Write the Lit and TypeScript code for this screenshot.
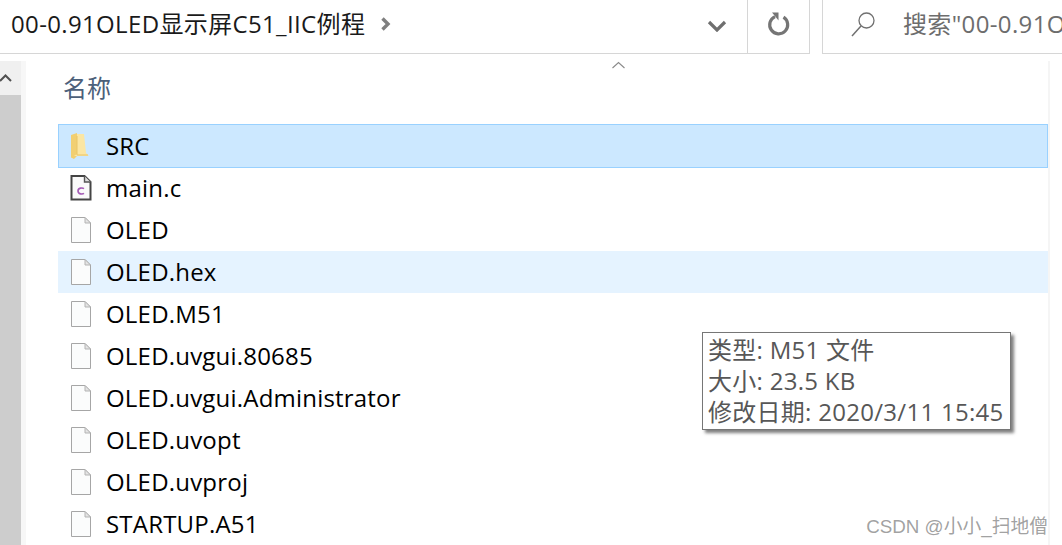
import { LitElement, html, css, svg } from "lit";
import { customElement } from "lit/decorators.js";
import { classMap } from "lit/directives/class-map.js";

type Kind = "folder" | "c" | "file";
interface Row {
  name: string;
  kind: Kind;
  selected?: boolean;
  hover?: boolean;
}

const ROWS: Row[] = [
  { name: "SRC", kind: "folder", selected: true },
  { name: "main.c", kind: "c" },
  { name: "OLED", kind: "file" },
  { name: "OLED.hex", kind: "file", hover: true },
  { name: "OLED.M51", kind: "file" },
  { name: "OLED.uvgui.80685", kind: "file" },
  { name: "OLED.uvgui.Administrator", kind: "file" },
  { name: "OLED.uvopt", kind: "file" },
  { name: "OLED.uvproj", kind: "file" },
  { name: "STARTUP.A51", kind: "file" },
];

const folderIcon = svg`<svg width="22" height="28" viewBox="0 0 22 28">
  <path d="M1 3 L7 1 L7 24 L4 27 L1 25.5 Z" fill="#f1cf72"/>
  <path d="M7 2 H14 L16 21 L19 24 H4 L7 22 Z" fill="#fbe6a3"/>
  <path d="M7 4 V23 H18" fill="none" stroke="#e8c468" stroke-width="1"/>
</svg>`;

const fileIcon = svg`<svg width="22" height="28" viewBox="0 0 22 28">
  <path d="M1.5 1.5 H15 L20.5 7 V26.5 H1.5 Z" fill="#fbfcfc" stroke="#a6a6a6"/>
  <path d="M15 1.5 V7 H20.5 Z" fill="#e4e4e4" stroke="#b4b4b4"/>
</svg>`;

const cIcon = svg`<svg width="22" height="28" viewBox="0 0 22 28">
  <path d="M1.5 2 H14.5 L20.5 8 V25.5 H1.5 Z" fill="#fafafa" stroke="#444" stroke-width="2"/>
  <path d="M14.5 2 V8 H20.5" fill="#ddd" stroke="#555" stroke-width="1.4"/>
  <path d="M14 14.6 C12.6 13.6 8 13.6 8 17 C8 20.4 12.6 20.4 14 19.4" fill="none" stroke="#a45bb5" stroke-width="1.6"/>
</svg>`;

@customElement("app-root")
export class AppRoot extends LitElement {
  static styles = css`
    :host {
      display: block;
      position: relative;
      width: 1062px;
      height: 545px;
      overflow: hidden;
      background: #fff;
      font-family: "Open Sans", "Noto Sans CJK SC", sans-serif;
      color: #000;
    }

    .topbar {
      display: flex;
      height: 54px;
    }
    .address {
      width: 748px;
      flex: none;
      display: flex;
      align-items: center;
      box-sizing: border-box;
      border-bottom: 1px solid #d6d6d6;
      border-right: 1px solid #d6d6d6;
      padding: 0 20px 5px 11px;
    }
    .crumb {
      flex: 1;
      display: flex;
      align-items: center;
      gap: 15px;
      font-size: 24px;
      letter-spacing: 0.35px;
      color: #1a1a1a;
      white-space: nowrap;
    }
    .crumb span {
      margin-top: -4px;
    }
    .address > svg {
      flex: none;
      margin-top: 3px;
    }
    .refresh {
      width: 62px;
      flex: none;
      box-sizing: border-box;
      border-bottom: 1px solid #d6d6d6;
      border-right: 1px solid #d6d6d6;
      display: flex;
      align-items: center;
      justify-content: center;
      padding-bottom: 4px;
    }
    .search {
      margin-left: 12px;
      flex: 1;
      min-width: 0;
      box-sizing: border-box;
      border-bottom: 1px solid #d6d6d6;
      border-left: 1px solid #d6d6d6;
      display: flex;
      align-items: center;
      gap: 26px;
      padding: 0 0 5px 28px;
      font-size: 24px;
      letter-spacing: 0.35px;
      color: #6d6d6d;
      white-space: nowrap;
      overflow: hidden;
    }
    .search span {
      margin-top: -4px;
    }
    .search svg {
      flex: none;
    }

    .body {
      display: flex;
      padding-top: 7px;
      height: 484px;
    }
    .scroll {
      width: 21px;
      flex: none;
      display: flex;
      flex-direction: column;
      background: #cdcdcd;
      border-right: 5px solid #f7f7f7;
    }
    .scroll-up {
      height: 34px;
      background: #f0f0f0;
      display: flex;
      align-items: center;
    }
    .main {
      flex: 1;
      min-width: 0;
      padding-left: 32px;
      border-right: 2px solid #f5f5f5;
      margin-right: 12px;
    }
    .head {
      height: 63px;
      padding: 9px 0 0 5px;
      box-sizing: border-box;
      font-size: 24px;
      line-height: 36px;
      color: #4c607a;
    }
    .row {
      display: flex;
      align-items: center;
      gap: 14px;
      height: 42px;
      padding: 0 0 2px 12px;
      font-size: 24px;
      letter-spacing: 0.2px;
      white-space: nowrap;
      box-sizing: border-box;
    }
    .row svg {
      flex: none;
      margin-top: 2px;
    }
    .row.selected {
      height: 44px;
      background: #cce8ff;
      border: 1px solid #99d1ff;
      padding-left: 11px;
      margin-bottom: -1px;
    }
    .row.hover {
      background: #e5f3ff;
    }

    .sort {
      position: absolute;
      left: 611px;
      top: 61px;
    }
    .tip {
      position: absolute;
      left: 702px;
      top: 332px;
      width: 309px;
      height: 98px;
      box-sizing: border-box;
      background: #fff;
      border: 1px solid #767676;
      box-shadow: 3px 3px 3px rgba(0, 0, 0, 0.5);
      padding: 1px 0 0 5px;
      font-size: 24px;
      line-height: 31px;
      letter-spacing: 0.28px;
      color: #575757;
      white-space: nowrap;
    }
    .mark {
      position: absolute;
      right: 14px;
      top: 514px;
      font-size: 18.8px;
      line-height: 25px;
      color: rgba(120, 120, 120, 0.7);
      white-space: nowrap;
      font-family: "Liberation Sans", "Noto Sans CJK SC", sans-serif;
    }
  `;

  private icon(kind: Kind) {
    if (kind === "folder") return folderIcon;
    if (kind === "c") return cIcon;
    return fileIcon;
  }

  render() {
    return html`
      <div class="topbar">
        <div class="address">
          <div class="crumb">
            <span>00-0.91OLED显示屏C51_IIC例程</span>
            <svg width="12" height="16" viewBox="0 0 12 16">
              <path d="M2.5 2.5 L8 8 L2.5 13.5" fill="none" stroke="#7f7f7f" stroke-width="3.4"/>
            </svg>
          </div>
          <svg width="20" height="12" viewBox="0 0 20 12">
            <path d="M2 2 L10 10 L18 2" fill="none" stroke="#6f6f6f" stroke-width="3.2"/>
          </svg>
        </div>
        <div class="refresh">
          <svg width="24" height="26" viewBox="0 0 24 26">
            <path d="M8 4.6 A9 9 0 1 0 16.5 5.2" fill="none" stroke="#757575" stroke-width="3.2"/>
            <path d="M5 0.5 H11.5 V8.5 Z" fill="#757575"/>
          </svg>
        </div>
        <div class="search">
          <svg width="26" height="26" viewBox="0 0 26 26">
            <circle cx="15.5" cy="9.5" r="7.5" fill="none" stroke="#707070" stroke-width="1.3"/>
            <path d="M10 15 L1 25" stroke="#707070" stroke-width="1.5"/>
          </svg>
          <span>搜索"00-0.91O</span>
        </div>
      </div>
      <div class="body">
        <div class="scroll">
          <div class="scroll-up">
            <svg width="12" height="10" viewBox="0 0 12 10">
              <path d="M0 8 L5.5 2.5 L11 8" fill="none" stroke="#505050" stroke-width="2"/>
            </svg>
          </div>
        </div>
        <div class="main">
          <div class="head">名称</div>
          ${ROWS.map(
            (r) => html`
              <div class="row ${classMap({ selected: !!r.selected, hover: !!r.hover })}">
                ${this.icon(r.kind)}<span>${r.name}</span>
              </div>
            `
          )}
        </div>
      </div>
      <svg class="sort" width="15" height="8" viewBox="0 0 15 8">
        <path d="M1.5 7 L7.5 1.5 L13.5 7" fill="none" stroke="#8a8a8a" stroke-width="1.1"/>
      </svg>
      <div class="tip">
        <div>类型: M51 文件</div>
        <div>大小: 23.5 KB</div>
        <div>修改日期: 2020/3/11 15:45</div>
      </div>
      <div class="mark">CSDN @小小_扫地僧</div>
    `;
  }
}
